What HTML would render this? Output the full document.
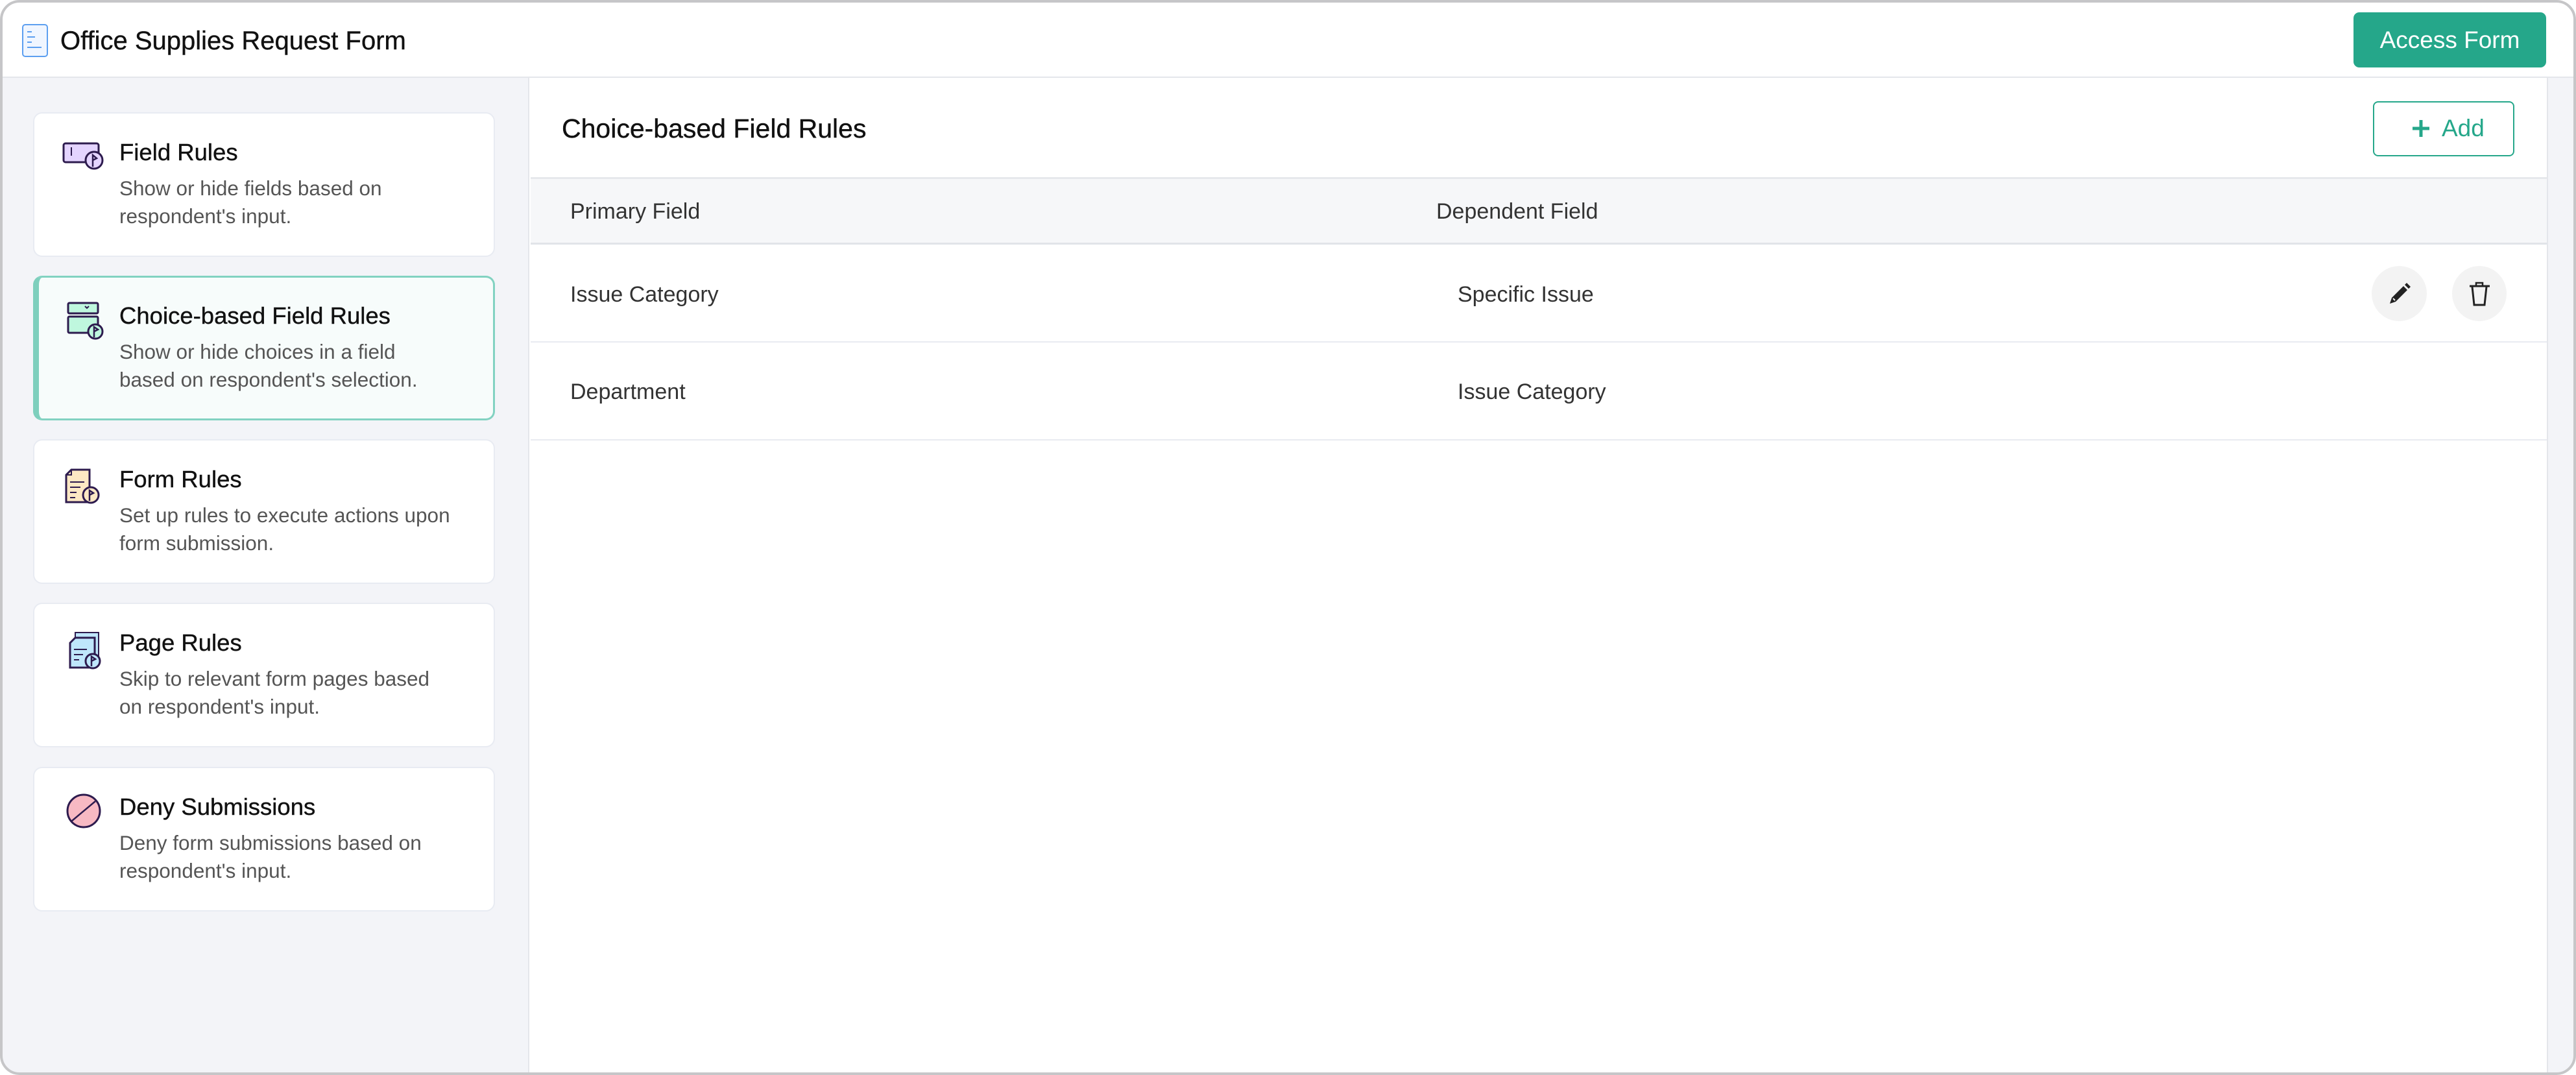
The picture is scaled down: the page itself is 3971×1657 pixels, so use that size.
<!DOCTYPE html>
<html><head><meta charset="utf-8"><style>
*{margin:0;padding:0;box-sizing:border-box}
body{width:3971px;height:1657px;background:#fff;font-family:"Liberation Sans",sans-serif;position:relative;overflow:hidden}
.frame{position:absolute;left:0;top:0;width:3971px;height:1657px;border-radius:30px;overflow:hidden;background:#fff}
.bord{position:absolute;left:0;top:0;width:3971px;height:1657px;border:4px solid #c6c6c8;border-radius:30px;pointer-events:none}
.abs{position:absolute}
.side{position:absolute;left:0;top:120px;width:816px;height:1540px;background:#f3f4f8;border-right:2px solid #e4e6eb}
.card{position:absolute;left:51px;width:712px;height:223px;background:#fff;border:2px solid #e8ebf2;border-radius:14px}
.card.sel{background:#f7fcfb;border:3px solid #82d2c1;border-left:9px solid #7ecfbd}
.ct{position:absolute;left:184px;font-size:36.5px;color:#111;white-space:nowrap;-webkit-text-stroke:0.4px #111}
.cd{position:absolute;left:184px;font-size:31.5px;color:#555;line-height:43px;white-space:nowrap}
.th{position:absolute;font-size:34px;color:#333;white-space:nowrap}
</style></head><body>
<div class="frame">
<div class="abs" style="left:0;top:118px;width:3971px;height:2px;background:#e4e6eb"></div>
<svg class="abs" style="left:33px;top:36px" width="44" height="54" viewBox="0 0 44 54"><rect x="2" y="2" width="38" height="49" rx="4" fill="#f0f6ff" stroke="#5c9ff0" stroke-width="2"/><path d="M9 13h7M9 21h12M9 29h7M9 37h22" stroke="#5c9ff0" stroke-width="2"/></svg>
<div class="abs" style="left:93px;top:41px;font-size:40px;color:#111;white-space:nowrap;-webkit-text-stroke:0.4px #111">Office Supplies Request Form</div>
<div class="abs" style="left:3628px;top:19px;width:297px;height:85px;background:#25a78a;border-radius:9px;color:#fff;font-size:37px;text-align:center;line-height:85px">Access Form</div>

<div class="side"></div>
<div class="abs" style="left:3926px;top:120px;width:45px;height:1540px;background:#f3f4f8;border-left:2px solid #e4e6eb"></div>

<div class="card" style="top:173px"></div>
<div class="card sel" style="top:425px"></div>
<div class="card" style="top:677px"></div>
<div class="card" style="top:929px"></div>
<div class="card" style="top:1182px"></div>

<svg class="abs" style="left:96px;top:217px" width="70" height="50"><rect x="2" y="4" width="54" height="29" rx="3" fill="#e4d4ff" stroke="#2d1b4e" stroke-width="3"/><path d="M14 10v13" stroke="#2d1b4e" stroke-width="2"/><circle cx="49" cy="30" r="13" fill="#e4d4ff" stroke="#2d1b4e" stroke-width="3"/><path d="M47 40V22l6 5-6 3" fill="none" stroke="#2d1b4e" stroke-width="2.5"/></svg>
<svg class="abs" style="left:96px;top:462px" width="70" height="70"><rect x="9" y="5" width="46" height="16" rx="2" fill="#bff7de" stroke="#2d1b4e" stroke-width="3"/><path d="M35 10l3 3 3-3" fill="none" stroke="#2d1b4e" stroke-width="2"/><rect x="9" y="26" width="46" height="25" rx="2" fill="#bff7de" stroke="#2d1b4e" stroke-width="3"/><circle cx="51" cy="49" r="11" fill="#bff7de" stroke="#2d1b4e" stroke-width="3"/><path d="M49 58V42l6 4-6 3" fill="none" stroke="#2d1b4e" stroke-width="2.5"/></svg>
<svg class="abs" style="left:96px;top:721px" width="70" height="60"><path d="M14 3h28v50H6V11z" fill="#fde8c4" stroke="#2d1b4e" stroke-width="3"/><path d="M14 3v8H6" fill="none" stroke="#2d1b4e" stroke-width="2"/><path d="M12 22h22M12 30h16M12 38h10M12 46h8" stroke="#2d1b4e" stroke-width="2"/><circle cx="44" cy="42" r="12" fill="#fde8c4" stroke="#2d1b4e" stroke-width="3"/><path d="M42 51V35l6 4-6 3" fill="none" stroke="#2d1b4e" stroke-width="2.5"/></svg>
<svg class="abs" style="left:96px;top:973px" width="70" height="60"><rect x="20" y="2" width="36" height="42" fill="#bfe6fb" stroke="#2d1b4e" stroke-width="2"/><path d="M20 10h30v46H12V18z" fill="#bfe6fb" stroke="#2d1b4e" stroke-width="3"/><path d="M18 28h20M18 36h14M18 44h8" stroke="#2d1b4e" stroke-width="2"/><circle cx="47" cy="46" r="11" fill="#bfe6fb" stroke="#2d1b4e" stroke-width="3"/><path d="M45 54V39l6 4-6 3" fill="none" stroke="#2d1b4e" stroke-width="2.5"/></svg>
<svg class="abs" style="left:100px;top:1221px" width="60" height="60"><circle cx="29" cy="29" r="25" fill="#f7b9c3" stroke="#2d1b4e" stroke-width="3"/><path d="M10 45L47 14" stroke="#2d1b4e" stroke-width="2.5"/></svg>

<div class="ct" style="top:214px">Field Rules</div>
<div class="cd" style="top:269px">Show or hide fields based on<br>respondent's input.</div>
<div class="ct" style="top:466px">Choice-based Field Rules</div>
<div class="cd" style="top:521px">Show or hide choices in a field<br>based on respondent's selection.</div>
<div class="ct" style="top:718px">Form Rules</div>
<div class="cd" style="top:773px">Set up rules to execute actions upon<br>form submission.</div>
<div class="ct" style="top:970px">Page Rules</div>
<div class="cd" style="top:1025px">Skip to relevant form pages based<br>on respondent's input.</div>
<div class="ct" style="top:1223px">Deny Submissions</div>
<div class="cd" style="top:1278px">Deny form submissions based on<br>respondent's input.</div>

<div class="abs" style="left:866px;top:175px;font-size:41px;color:#111;white-space:nowrap;-webkit-text-stroke:0.4px #111">Choice-based Field Rules</div>
<div class="abs" style="left:3658px;top:156px;width:218px;height:85px;border:2px solid #25a78a;border-radius:8px;background:#fff"></div>
<svg class="abs" style="left:3717px;top:183px" width="30" height="30"><path d="M15 2v26M2 15h26" stroke="#25a78a" stroke-width="5"/></svg>
<div class="abs" style="left:3764px;top:177px;font-size:37px;color:#25a78a">Add</div>

<div class="abs" style="left:818px;top:273px;width:3108px;height:104px;background:#f6f7f9;border-top:3px solid #e6e8ec;border-bottom:3px solid #e1e4e9"></div>
<div class="th" style="left:879px;top:307px">Primary Field</div>
<div class="th" style="left:2214px;top:307px">Dependent Field</div>
<div class="abs" style="left:818px;top:526px;width:3108px;height:2px;background:#e8ebf1"></div>
<div class="abs" style="left:818px;top:677px;width:3108px;height:2px;background:#e8ebf1"></div>
<div class="th" style="left:879px;top:435px">Issue Category</div>
<div class="th" style="left:2247px;top:435px">Specific Issue</div>
<div class="th" style="left:879px;top:585px">Department</div>
<div class="th" style="left:2247px;top:585px">Issue Category</div>

<div class="abs" style="left:3656px;top:410px;width:85px;height:85px;border-radius:50%;background:#f3f3f3"></div>
<div class="abs" style="left:3780px;top:410px;width:84px;height:85px;border-radius:50%;background:#f3f3f3"></div>
<svg class="abs" style="left:3680px;top:434px" width="38" height="38"><path d="M4 34l3-9L25 7l6 6-18 18z" fill="#222"/><path d="M27 5l3-3 6 6-3 3z" fill="#222"/><path d="M9 26l3 3" stroke="#f3f3f3" stroke-width="2"/></svg>
<svg class="abs" style="left:3805px;top:433px" width="36" height="40"><path d="M12 7V3h10v4" fill="none" stroke="#222" stroke-width="2.5"/><path d="M2 8h31" stroke="#222" stroke-width="3"/><path d="M6 9l3 28h16l3-28" fill="none" stroke="#222" stroke-width="3"/></svg>
</div>
<div class="bord"></div>
</body></html>
